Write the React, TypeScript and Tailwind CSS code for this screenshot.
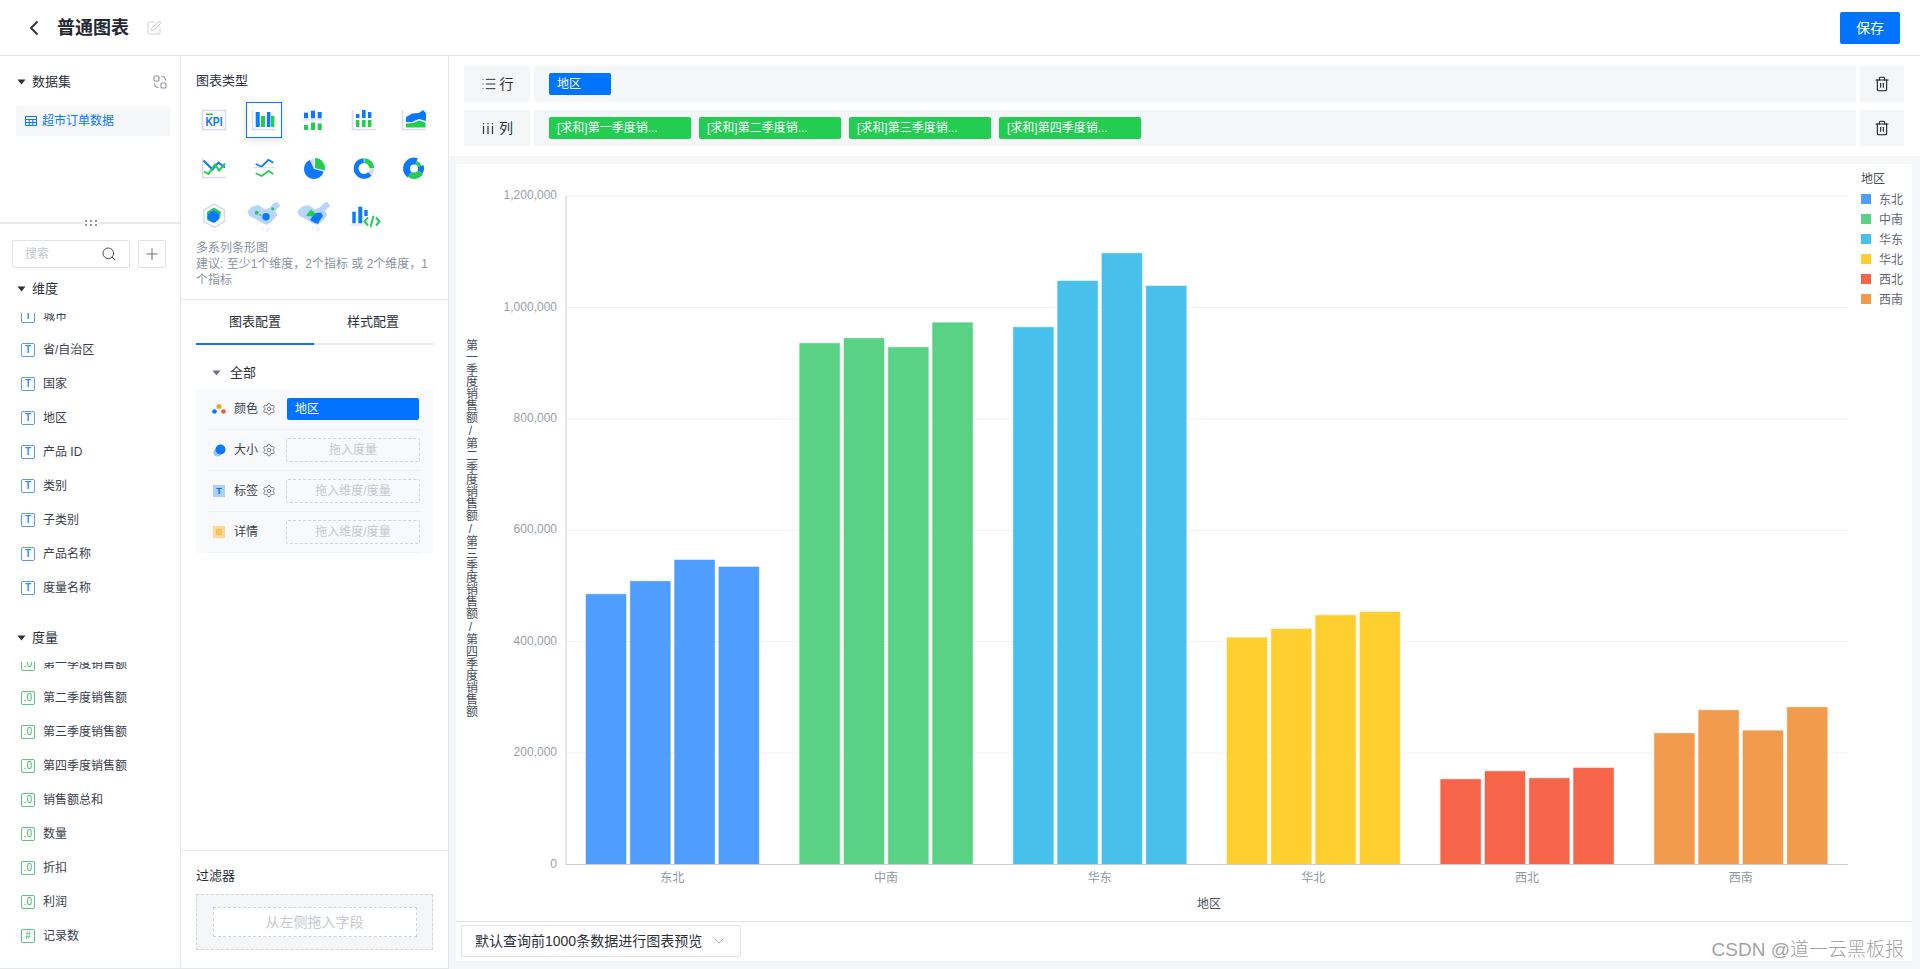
import React from 'react';
import { ChevronLeft, ChevronDown, List, Plus, Search, Settings, SquarePen, Trash2 } from 'lucide-react';

const BLUE = '#0a78ff';
const GREEN = '#22cd52';
const AXIS = '#d7dce8';

const pt = (cx: number, cy: number, r: number, a: number) => {
  const t = (a * Math.PI) / 180;
  return `${(cx + r * Math.sin(t)).toFixed(2)} ${(cy - r * Math.cos(t)).toFixed(2)}`;
};
const sector = (cx: number, cy: number, r: number, a0: number, a1: number) =>
  `M${cx} ${cy}L${pt(cx, cy, r, a0)}A${r} ${r} 0 ${a1 - a0 > 180 ? 1 : 0} 1 ${pt(cx, cy, r, a1)}Z`;
const ring = (cx: number, cy: number, R: number, r: number, a0: number, a1: number) =>
  `M${pt(cx, cy, R, a0)}A${R} ${R} 0 ${a1 - a0 > 180 ? 1 : 0} 1 ${pt(cx, cy, R, a1)}L${pt(cx, cy, r, a1)}A${r} ${r} 0 ${a1 - a0 > 180 ? 1 : 0} 0 ${pt(cx, cy, r, a0)}Z`;

const CHINA = 'M-1.7 10.7L2.6 5.7L9.3 4L16 8.4L21 6.4L24.3 2.4L28.3 0.7L31 5L26 9.7L28.3 14L22.6 20.7L17.6 24L11 20.7L6 17.4L0.3 15Z';

const Axes = () => <path d="M3.5 5V24.5H27" fill="none" stroke={AXIS} strokeWidth="1.5" />;

const chartIcons: React.ReactNode[] = [
  <>
    <rect x="3.5" y="5.5" width="23" height="19" fill="#fff" stroke={AXIS} strokeWidth="1.5" />
    <rect x="7" y="8.5" width="7" height="1.6" fill={GREEN} />
    <text x="6.5" y="21" fontSize="12" fontWeight="700" fill={BLUE} textLength="17" lengthAdjust="spacingAndGlyphs" fontFamily="Liberation Sans, sans-serif">KPI</text>
  </>,
  <>
    <Axes />
    <rect x="6.7" y="7" width="4" height="15" fill={BLUE} />
    <rect x="12" y="11" width="4" height="11" fill={GREEN} />
    <rect x="18" y="7" width="3.4" height="15" fill={BLUE} />
    <rect x="22" y="11" width="3.4" height="11" fill={GREEN} />
  </>,
  <>
    <rect x="5" y="7.7" width="4" height="5.6" fill={BLUE} />
    <rect x="12" y="5.7" width="4" height="7.6" fill={BLUE} />
    <rect x="18.7" y="7" width="4" height="6.3" fill={BLUE} />
    <rect x="3" y="14.4" width="22" height="1" fill={AXIS} />
    <rect x="5" y="20" width="4" height="5" fill={GREEN} />
    <rect x="12" y="17.5" width="4" height="7.5" fill={GREEN} />
    <rect x="18.7" y="18.5" width="4" height="6.5" fill={GREEN} />
  </>,
  <>
    <Axes />
    <rect x="7" y="9" width="3.4" height="4" fill={BLUE} />
    <rect x="7" y="15" width="3.4" height="7" fill={GREEN} />
    <rect x="13" y="5" width="3.6" height="8" fill={BLUE} />
    <rect x="13" y="15" width="3.6" height="7" fill={GREEN} />
    <rect x="19" y="7" width="3.4" height="6" fill={BLUE} />
    <rect x="19" y="15" width="3.4" height="7" fill={GREEN} />
  </>,
  <>
    <Axes />
    <path d="M7 12L13 8.5L20 8L24 5L27 8V16L20 14L13 17L7 17Z" fill={BLUE} />
    <path d="M7 18.5L14 18L20 15.5L26.5 17.5V22.5H7Z" fill={GREEN} />
  </>,
  <>
    <Axes />
    <path d="M4.5 7.5L13.5 16.5L19.5 9.5L26 14.5" fill="none" stroke={BLUE} strokeWidth="2" />
    <path d="M5 18.5L9.5 21L16 11.5L20 17.5L26 10.5" fill="none" stroke={GREEN} strokeWidth="2" />
  </>,
  <>
    <path d="M6.7 11L12.7 13.7L19.3 6.8L24.3 9.7" fill="none" stroke={BLUE} strokeWidth="1.8" />
    <rect x="4" y="14.2" width="22" height="1" fill={AXIS} />
    <path d="M6.7 20.3L12.7 23L19.3 18L24.3 21" fill="none" stroke={GREEN} strokeWidth="1.8" />
  </>,
  <>
    <path d={sector(15, 16, 10, -25, 0)} fill={AXIS} />
    <path d={sector(16, 15, 10, 0, 105)} fill={GREEN} />
    <path d={sector(15, 16, 10, 105, 335)} fill={BLUE} />
  </>,
  <>
    <path d={ring(15, 15.5, 10.3, 5.5, 3, 88)} fill={GREEN} />
    <path d={ring(15, 15.5, 10.3, 5.5, 90, 130)} fill={AXIS} />
    <path d={ring(15, 15.5, 10.3, 5.5, 132, 358)} fill={BLUE} />
  </>,
  <>
    <path d={sector(15, 15.5, 11, 215, 380)} fill={BLUE} />
    <path d={sector(15, 15.5, 8, 20, 70)} fill={GREEN} />
    <path d={sector(15, 15.5, 10, 70, 120)} fill={BLUE} />
    <path d={sector(15, 15.5, 10.5, 120, 215)} fill={GREEN} />
    <circle cx="15" cy="15.5" r="4" fill="#fff" />
  </>,
  <>
    <path d="M15.2 3.2L25.5 9V20.5L15.2 26.3L5 20.5V9Z" fill="#fff" stroke={AXIS} strokeWidth="1.5" />
    <path d="M15 6.5L22 11L21 17L15 22L8 19L8 11Z" fill={GREEN} />
    <circle cx="14.5" cy="15.5" r="5.7" fill={BLUE} />
  </>,
  <>
    <path d={CHINA} fill="#b7d5ff" />
    <path d="M14 26V30M18 25V31M21 27L19 30" stroke="#e4eefc" strokeWidth="1" fill="none" />
    <circle cx="7.7" cy="11.7" r="2" fill={GREEN} />
    <circle cx="23.7" cy="7.7" r="1.5" fill={GREEN} />
    <circle cx="11.3" cy="14" r="1" fill={GREEN} />
    <circle cx="17" cy="15.7" r="3.7" fill={BLUE} />
  </>,
  <>
    <path d={CHINA} fill="#b7d5ff" />
    <path d="M14 26V30M18 25V31M21 27L19 30" stroke="#e4eefc" strokeWidth="1" fill="none" />
    <path d="M8 13L12 8.5L15 11L18 14L14 15.5L7 15Z" fill={GREEN} />
    <path d="M13 16L17 12L22 11.5L24 15L21 19L19 23L15 21.5L11 19Z" fill={BLUE} />
  </>,
  <>
    <rect x="3.3" y="10.7" width="3.4" height="11.6" fill={BLUE} />
    <rect x="9.3" y="5.7" width="4" height="16.6" fill={BLUE} />
    <rect x="15.3" y="9" width="3.4" height="6" fill={BLUE} />
    <rect x="1.7" y="23.5" width="14" height="1" fill={AXIS} />
    <path d="M19 16.5L15.5 20.5L19 24.5M24.5 15L21.5 26M27 16.5L30.5 20.5L27 24.5" fill="none" stroke={GREEN} strokeWidth="2" />
  </>,
];

const Caret = ({ color = '#2b303b' }: { color?: string }) => (
  <svg width="9" height="6" viewBox="0 0 9 6" className="shrink-0">
    <path d="M0.5 0.5H8.5L4.5 5.5Z" fill={color} />
  </svg>
);

const Gear = () => <Settings size={14} strokeWidth={1.4} className="text-[#5f6673]" />;

const Dimension = ({ name }: { name: string }) => (
  <div className="flex h-[34px] items-center pl-[21px] text-xs text-[#3a404c]">
    <span className="mr-2 flex h-[14px] w-[14px] shrink-0 items-center justify-center rounded-[2px] border border-[#5a98f5] text-[10px] leading-none font-bold text-[#3f8cf3]">T</span>
    {name}
  </div>
);

const Measure = ({ name, mark = '.0' }: { name: string; mark?: string }) => (
  <div className="flex h-[34px] items-center pl-[21px] text-xs text-[#3a404c]">
    <span className="mr-2 flex h-[14px] w-[14px] shrink-0 items-center justify-center rounded-[2px] border border-[#5cc488] text-[10px] leading-none text-[#35b56b]">{mark}</span>
    {name}
  </div>
);

const SectionHead = ({ title }: { title: string }) => (
  <div className="flex h-5 items-center gap-[6px] pl-[17px] text-[13px] text-[#2b303b]">
    <Caret />
    {title}
  </div>
);

const ConfigRow = ({ icon, label, gear, children }: { icon: React.ReactNode; label: string; gear?: boolean; children: React.ReactNode }) => (
  <div className="mx-3 flex h-[41px] items-center border-b border-[#f0f1f4]">
    <div className="flex w-[78px] items-center pl-1 text-xs text-[#3a404c]">
      <span className="mr-2 flex w-[14px] shrink-0 justify-center">{icon}</span>
      <span className="w-[24px] shrink-0">{label}</span>
      {gear && <span className="ml-[4px]"><Gear /></span>}
    </div>
    {children}
  </div>
);

const DropHint = ({ text }: { text: string }) => (
  <div className="flex h-6 w-[134px] items-center justify-center rounded-[2px] border border-dashed border-[#d0d3d9] text-xs text-[#c5c9d0]">{text}</div>
);

const Chip = ({ text, className }: { text: string; className: string }) => (
  <div className={`flex h-[22px] items-center rounded-[2px] pl-2 text-xs whitespace-nowrap text-white ${className}`}>{text}</div>
);

const groups = [
  { name: '东北', color: '#4f9dff', tops: [594.3, 581.3, 560, 567] },
  { name: '中南', color: '#59d285', tops: [343.3, 338.3, 347.3, 322.7] },
  { name: '华东', color: '#47c0ec', tops: [327.3, 281, 253.3, 286] },
  { name: '华北', color: '#ffcf30', tops: [637.7, 629, 615.3, 612] },
  { name: '西北', color: '#f6654a', tops: [779.3, 771.3, 778.3, 768] },
  { name: '西南', color: '#f29b4c', tops: [733.3, 710.3, 730.7, 707.3] },
];

const ticks = ['0', '200,000', '400,000', '600,000', '800,000', '1,000,000', '1,200,000'];
const BASE = 864.5;

const Chart = () => (
  <svg viewBox="456 164 1456 757" width="1456" height="757" className="block" fontFamily="Liberation Sans, Noto Sans CJK SC, sans-serif" fontSize="12">
    {ticks.map((t, i) => {
      const y = BASE - i * 111.4;
      return (
        <g key={t}>
          {i > 0 && <line x1="566" x2="1848" y1={y} y2={y} stroke="#f1f2f4" />}
          <text x="557" y={y + 3} textAnchor="end" fill="#98a0ac">{t}</text>
        </g>
      );
    })}
    <line x1="566" x2="566" y1="196" y2={BASE} stroke="#c8cdd6" />
    {groups.map((g, gi) => (
      <g key={g.name}>
        {g.tops.map((top, i) => (
          <rect key={i} x={586 + gi * 213.67 + i * 44.3} y={top} width="40" height={BASE - top} fill={g.color} stroke={g.color} strokeOpacity="0.5" />
        ))}
        <text x={672.3 + gi * 213.67} y="882" textAnchor="middle" fill="#8f97a3">{g.name}</text>
      </g>
    ))}
    <line x1="566" x2="1848" y1={BASE} y2={BASE} stroke="#c8cdd6" />
    <text x="1209" y="908" textAnchor="middle" fill="#4a4f5a">地区</text>
    <text x="470.5" y="528.5" textAnchor="middle" fill="#4a4f5a" className="[writing-mode:vertical-rl] [text-orientation:upright]">
      第一季度销售额/第二季度销售额/第三季度销售额/第四季度销售额
    </text>
    <text x="1861" y="183" fill="#4a4f5a">地区</text>
    {groups.map((g, i) => (
      <g key={g.name}>
        <rect x="1861" y={194 + i * 20} width="10" height="10" fill={g.color} />
        <text x="1879" y={203.5 + i * 20} fill="#5f6673">{g.name}</text>
      </g>
    ))}
  </svg>
);

export default function App() {
  return (
    <div className="relative flex h-[969px] w-[1920px] flex-col overflow-hidden bg-white font-['Liberation_Sans','Noto_Sans_CJK_SC',sans-serif]">
      <header className="flex h-[56px] shrink-0 items-center border-b border-[#e5e6e8] pr-5 pl-[22px]">
        <ChevronLeft size={24} strokeWidth={1.8} className="text-[#2b303b]" />
        <h1 className="ml-[11px] text-lg font-bold text-[#23272f]">普通图表</h1>
        <SquarePen size={16} strokeWidth={1.5} className="ml-[17px] text-[#c9ced6]" />
        <button className="ml-auto h-8 w-[60px] rounded-[2px] bg-[#0073ff] text-sm text-white">保存</button>
      </header>

      <div className="flex min-h-0 flex-1">
        <aside className="flex w-[181px] shrink-0 flex-col border-r border-b border-[#e5e6eb]">
          <section className="relative h-[168px] shrink-0 border-b-2 border-[#e8e9ed] pt-4">
            <div className="flex items-center justify-between pr-[13px]">
              <SectionHead title="数据集" />
              <svg width="14" height="14" viewBox="0 0 14 14" fill="none" stroke="#8d95a3" strokeWidth="1.1">
                <rect x="1" y="1" width="5" height="5" rx="1" />
                <rect x="8" y="8" width="5" height="5" rx="1" />
                <path d="M8.5 1.5C11 1.5 12.5 3 12.5 5.5M5.5 12.5C3 12.5 1.5 11 1.5 8.5" />
              </svg>
            </div>
            <div className="mx-4 mt-[14px] flex h-[30px] w-[154px] items-center rounded-[2px] bg-[#f6f7f9] pl-[9px] text-xs text-[#0a78ff]">
              <svg width="12" height="10" viewBox="0 0 12 10" fill="none" stroke="#0a78ff" strokeWidth="1" className="mr-[5px]">
                <path d="M0.5 0.5H11.5V9.5H0.5ZM0.5 3.5H11.5M0.5 6.5H11.5M4.2 3.5V9.5M7.8 3.5V9.5" />
              </svg>
              超市订单数据
            </div>
            <div className="absolute bottom-[-4px] left-[84px] grid grid-cols-3 gap-x-[3px] gap-y-[2px] bg-white px-px">
              {[0, 1, 2, 3, 4, 5].map(i => <span key={i} className="h-[2px] w-[2px] bg-[#8d95a3]" />)}
            </div>
          </section>

          <div className="mt-4 flex h-7 shrink-0 gap-2 pl-3">
            <div className="flex w-[118px] items-center justify-between rounded-[2px] border border-[#e1e3e8] pr-[12px] pl-3 text-xs text-[#c5c9d0]">
              搜索
              <Search size={16} strokeWidth={1.4} className="text-[#3a404c]" />
            </div>
            <div className="flex w-7 items-center justify-center rounded-[2px] border border-[#e1e3e8]">
              <Plus size={18} strokeWidth={1.4} className="text-[#6b7280]" />
            </div>
          </div>

          <div className="mt-[11px]"><SectionHead title="维度" /></div>
          <div className="mt-[14px] h-[292px] shrink-0 overflow-hidden">
            <div className="-mt-[14px]">
              {['城市', '省/自治区', '国家', '地区', '产品 ID', '类别', '子类别', '产品名称', '度量名称'].map(n => <Dimension key={n} name={n} />)}
            </div>
          </div>

          <div className="mt-[23px]"><SectionHead title="度量" /></div>
          <div className="mt-[14px] flex-1 overflow-hidden">
            <div className="-mt-[15px]">
              {['第一季度销售额', '第二季度销售额', '第三季度销售额', '第四季度销售额', '销售额总和', '数量', '折扣', '利润'].map(n => <Measure key={n} name={n} />)}
              <Measure name="记录数" mark="#" />
            </div>
          </div>
        </aside>

        <aside className="flex w-[268px] shrink-0 flex-col border-r border-b border-[#e5e6eb]">
          <section className="h-[244px] shrink-0 border-b border-[#e8e9ed] pt-[15px]">
            <div className="flex h-5 items-center pl-[15px] text-[13px] text-[#2b303b]">图表类型</div>
            <div className="mt-[5px] ml-2 grid grid-cols-[repeat(5,50px)] auto-rows-[48px]">
              {chartIcons.map((icon, i) => (
                <div key={i} className="flex items-center justify-center">
                  <div className={`flex h-9 w-9 items-center justify-center ${i === 1 ? 'border border-[#0a78ff] shadow-[0_2px_8px_rgba(0,0,0,0.12)]' : ''}`}>
                    <svg width="30" height="30" viewBox="0 0 30 30" className="overflow-visible">{icon}</svg>
                  </div>
                </div>
              ))}
            </div>
            <p className="w-[251px] pl-[15px] text-xs leading-4 text-[#8a93a2]">
              多系列条形图
              <br />
              建议: 至少1个维度，2个指标 或 2个维度，1个指标
            </p>
          </section>

          <div className="mx-[15px] flex h-[45px] shrink-0 border-b-2 border-[#e8eaef] text-[13px] text-[#2b303b]">
            <div className="-mb-[2px] flex w-[118px] items-center justify-center border-b-2 border-[#0a78ff]">图表配置</div>
            <div className="flex w-[118px] items-center justify-center">样式配置</div>
          </div>

          <div className="mt-[18px] flex h-5 items-center gap-[9px] pl-[31px] text-[13px] text-[#2b303b]">
            <Caret color="#6b7280" />
            全部
          </div>
          <div className="mx-[15px] mt-[6px] h-[164px] shrink-0 bg-[#f8f9fb]">
            <ConfigRow
              gear
              label="颜色"
              icon={
                <svg width="14" height="10" viewBox="0 0 14 10">
                  <circle cx="7" cy="2.5" r="2.5" fill="#f5a623" />
                  <circle cx="2.5" cy="7.5" r="2.3" fill="#0a78ff" />
                  <circle cx="11.5" cy="7.5" r="2.3" fill="#f2592a" />
                </svg>
              }
            >
              <div className="ml-[1px] flex h-[22px] w-[132px] items-center rounded-[2px] bg-[#0073ff] pl-2 text-xs text-white">地区</div>
            </ConfigRow>
            <ConfigRow
              gear
              label="大小"
              icon={
                <svg width="13" height="13" viewBox="0 0 13 13">
                  <circle cx="4.5" cy="8.5" r="4" fill="#9cc6ff" />
                  <circle cx="7.5" cy="5.5" r="5" fill="#0a78ff" />
                </svg>
              }
            >
              <DropHint text="拖入度量" />
            </ConfigRow>
            <ConfigRow
              gear
              label="标签"
              icon={<span className="flex h-3 w-3 items-center justify-center bg-[#a9d0ff] text-[9px] leading-none font-bold text-[#0a6fe0]">T</span>}
            >
              <DropHint text="拖入维度/度量" />
            </ConfigRow>
            <ConfigRow
              label="详情"
              icon={
                <svg width="12" height="12" viewBox="0 0 12 12">
                  <rect width="12" height="12" fill="#ffd899" />
                  <path d="M3 4H9M3 6H9M3 8H9" stroke="#f5a623" strokeWidth="1" />
                </svg>
              }
            >
              <DropHint text="拖入维度/度量" />
            </ConfigRow>
          </div>

          <div className="flex-1" />

          <section className="h-[118px] shrink-0 border-t border-[#e8e9ed] px-[15px] pt-[15px]">
            <div className="flex h-5 items-center text-[13px] text-[#2b303b]">过滤器</div>
            <div className="mt-2 flex h-14 items-center justify-center border border-dashed border-[#d0d3d9] bg-[#f5f6f8]">
              <div className="flex h-[30px] w-[204px] items-center justify-center border border-dashed border-[#d0d3d9] bg-white text-sm text-[#c5c9d0]">从左侧拖入字段</div>
            </div>
          </section>
        </aside>

        <main className="flex min-w-0 flex-1 flex-col bg-[#f5f6f8]">
          <div className="flex h-[100px] shrink-0 flex-col gap-2 bg-white pt-[10px] pr-4 pl-[15px]">
            <div className="flex h-9 gap-1">
              <div className="flex w-[66px] items-center justify-center gap-[3px] rounded-[2px] bg-[#f5f6f8] text-sm text-[#2b303b]">
                <List size={16} strokeWidth={1.5} />行
              </div>
              <div className="flex flex-1 items-center gap-2 rounded-[2px] bg-[#f5f6f8] pl-[15px]">
                <Chip text="地区" className="w-[62px] bg-[#0073ff]" />
              </div>
              <div className="flex w-11 items-center justify-center rounded-[2px] bg-[#f5f6f8]">
                <Trash2 size={16} strokeWidth={1.6} className="text-[#16181d]" />
              </div>
            </div>
            <div className="flex h-9 gap-1">
              <div className="flex w-[66px] items-center justify-center gap-1 rounded-[2px] bg-[#f5f6f8] text-sm text-[#2b303b]">
                <svg width="14" height="14" viewBox="0 0 14 14" stroke="currentColor" strokeWidth="1.2" fill="none">
                  <path d="M2.5 5V13M7 5V13M11.5 5V13M2.5 2V3.2M7 2V3.2M11.5 2V3.2" />
                </svg>
                列
              </div>
              <div className="flex flex-1 items-center gap-2 rounded-[2px] bg-[#f5f6f8] pl-[15px]">
                {['第一', '第二', '第三', '第四'].map(q => (
                  <Chip key={q} text={`[求和]${q}季度销...`} className="w-[142px] bg-[#22cd52]" />
                ))}
              </div>
              <div className="flex w-11 items-center justify-center rounded-[2px] bg-[#f5f6f8]">
                <Trash2 size={16} strokeWidth={1.6} className="text-[#16181d]" />
              </div>
            </div>
          </div>

          <div className="mt-2 mr-2 ml-[7px] bg-white">
            <Chart />
            <div className="h-10 border-t border-[#e3e5ea] pt-[3px] pl-[5px]">
              <div className="flex h-8 w-[280px] items-center justify-between rounded-[2px] border border-[#e1e3e8] px-[13px] text-sm text-[#2b303b]">
                默认查询前1000条数据进行图表预览
                <ChevronDown size={16} strokeWidth={1.3} className="text-[#9aa1ad]" />
              </div>
            </div>
          </div>
        </main>
      </div>

      <div className="absolute right-[16px] bottom-[5px] text-[19px] font-light text-[#a3a3a3]">CSDN @道一云黑板报</div>
    </div>
  );
}
